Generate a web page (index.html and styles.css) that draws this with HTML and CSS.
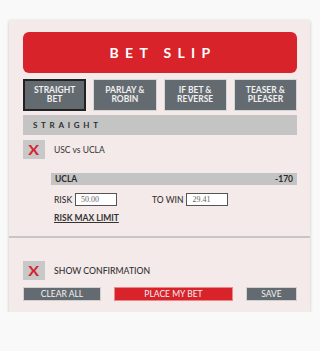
FILE: index.html
```html
<!DOCTYPE html>
<html>
<head>
<meta charset="utf-8">
<link rel="stylesheet" href="styles.css">
</head>
<body>
<div class="card">
  <div class="main">
    <div class="title">BET SLIP</div>
    <div class="tabs">
      <div class="tab active">STRAIGHT<br>BET</div>
      <div class="tab">PARLAY &amp;<br>ROBIN</div>
      <div class="tab">IF BET &amp;<br>REVERSE</div>
      <div class="tab">TEASER &amp;<br>PLEASER</div>
    </div>
    <div class="section">STRAIGHT</div>
    <div class="check-row">
      <div class="xbox"><span class="xmark">X</span></div>
      <div class="label">USC vs UCLA</div>
    </div>
    <div class="pick">
      <span>UCLA</span>
      <span>-170</span>
    </div>
    <div class="amounts">
      <div class="amount risk">
        <span class="amount-label">RISK</span>
        <div class="input">50.00</div>
      </div>
      <div class="amount">
        <span class="amount-label">TO WIN</span>
        <div class="input">29.41</div>
      </div>
    </div>
    <div class="max-limit">RISK MAX LIMIT</div>
  </div>
  <div class="footer">
    <div class="check-row">
      <div class="xbox"><span class="xmark">X</span></div>
      <div class="label confirm">SHOW CONFIRMATION</div>
    </div>
    <div class="actions">
      <div class="btn clear">CLEAR ALL</div>
      <div class="btn place">PLACE MY BET</div>
      <div class="btn save">SAVE</div>
    </div>
  </div>
</div>
</body>
</html>
```

FILE: styles.css
```css
* { box-sizing: border-box; }
body {
  margin: 0;
  background: #f9f9f9;
  font-family: Lato, "Open Sans", sans-serif;
  color: #333;
}
.card {
  margin: 20px 10px 0 9px;
  background: #f4eaea;
  box-shadow: 0 1px 3px rgba(0,0,0,0.22);
}
.main {
  padding: 12px 13px 12px 14px;
  border-bottom: 2px solid #c6c6c6;
}
.title {
  height: 41px;
  background: #d8232a;
  border-radius: 6px;
  color: #fff;
  font-weight: 700;
  font-size: 14px;
  letter-spacing: 6.3px;
  padding-left: 6px;
  display: flex;
  align-items: center;
  justify-content: center;
}
.tabs {
  margin-top: 6px;
  display: grid;
  grid-template-columns: repeat(4, 1fr);
  gap: 7px;
}
.tab {
  height: 32px;
  background: #646b70;
  color: #f0f0f0;
  font-weight: 700;
  font-size: 8.5px;
  line-height: 8.6px;
  text-align: center;
  display: flex;
  align-items: center;
  justify-content: center;
  border: 1px solid #d6d6d6;
}
.tab.active {
  border: 2px solid #222;
}
.section {
  margin-top: 4px;
  height: 20px;
  background: #c4c4c4;
  font-weight: 700;
  font-size: 8px;
  letter-spacing: 3.7px;
  padding-left: 10px;
  display: flex;
  align-items: center;
  color: #2e2e2e;
}
.check-row {
  margin-top: 5px;
  display: flex;
  align-items: center;
}
.xbox {
  width: 22px;
  height: 19px;
  background: #c8c8c8;
  display: flex;
  align-items: center;
  justify-content: center;
}
.xmark {
  color: #d8232a;
  font-family: Lato, "Open Sans", sans-serif;
  font-weight: 700;
  font-size: 14px;
  line-height: 14px;
  display: inline-block;
  transform: scaleX(1.15);
}
.label {
  margin-left: 9px;
  font-size: 8.5px;
}
.label.confirm {
  font-size: 8.7px;
  font-weight: 500;
}
.pick {
  margin: 14px 0 0 28px;
  height: 12px;
  background: #c4c4c4;
  font-weight: 700;
  font-size: 8.5px;
  display: flex;
  align-items: center;
  justify-content: space-between;
  padding: 0 4px 0 4px;
  color: #2a2a2a;
}
.amounts {
  margin: 8px 0 0 31px;
  display: flex;
}
.amount {
  display: flex;
  align-items: center;
}
.amount.risk {
  width: 98px;
}
.amount-label {
  font-size: 8.5px;
  font-weight: 500;
  margin-right: 3px;
}
.input {
  width: 42px;
  height: 13px;
  border: 1px solid #555;
  background: #fff;
  font-family: "Liberation Serif", serif;
  font-size: 8px;
  color: #666;
  padding-left: 5px;
  line-height: 11px;
}
.max-limit {
  margin: 6px 0 0 31px;
  height: 12px;
  line-height: 12px;
  font-size: 8.5px;
  font-weight: 700;
  text-decoration: underline;
}
.footer {
  padding: 23px 13px 11px 14px;
}
.footer .check-row {
  margin-top: 0;
}
.actions {
  margin-top: 7px;
  display: flex;
  justify-content: space-between;
}
.btn {
  height: 14px;
  color: #f2f2f2;
  font-size: 8.5px;
  display: flex;
  align-items: center;
  justify-content: center;
  background: #646b70;
  border: 1px solid #d0d0d0;
}
.btn.clear { width: 78px; }
.btn.place { width: 119px; background: #d8232a; border-color: #e88; }
.btn.save { width: 51px; }
```
